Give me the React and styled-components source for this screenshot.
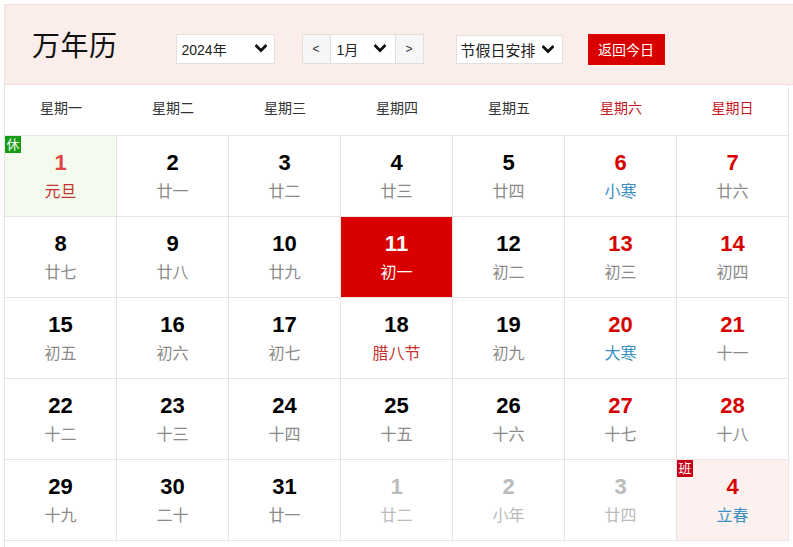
import React from "react";
import styled, { createGlobalStyle } from "styled-components";

const Global = createGlobalStyle`
  html, body { margin: 0; padding: 0; background: #fff; overflow: hidden; }
  body { font-family: "Liberation Sans", "Noto Sans CJK SC", sans-serif; }
`;

const Page = styled.div`
  padding: 4px 0 0 4px;
  width: 800px;
`;

const Header = styled.div`
  height: 81px;
  box-sizing: border-box;
  padding-top: 8px;
  padding-left: 27px;
  background: #fbeeea;
  border-top: 1px solid #f3e1dc;
  border-left: 1px solid #f3e1dc;
  border-bottom: 1px solid #efdcd7;
  display: flex;
  align-items: center;
`;

const Title = styled.h1`
  margin: 0 58px 0 0;
  font-size: 28px;
  font-weight: normal;
  color: #111;
  letter-spacing: 0.5px;
  line-height: 1;
  position: relative;
  top: -2px;
`;

const Select = styled.div`
  box-sizing: border-box;
  height: ${(p) => p.h || 30}px;
  width: ${(p) => p.w}px;
  background: #fff;
  border: 1px solid #e6dedd;
  display: flex;
  align-items: center;
  justify-content: space-between;
  padding: 0 ${(p) => p.pr || 7}px 0 ${(p) => p.pl || 5}px;
  font-size: ${(p) => p.fs || 14}px;
  color: #222;
`;

const Group = styled.div`
  display: flex;
  margin-left: 27px;
  border: 1px solid #e6dedd;
  height: 30px;
  box-sizing: border-box;
`;

const Arrow = styled.div`
  width: 27px;
  background: #f6f6f6;
  display: flex;
  align-items: center;
  justify-content: center;
  font-size: 12px;
  color: #333;
  border-${(p) => p.side}: 1px solid #e6dedd;
`;

const MonthSel = styled.div`
  width: 64px;
  background: #fff;
  display: flex;
  align-items: center;
  justify-content: space-between;
  padding: 0 9px 0 6px;
  box-sizing: border-box;
  font-size: 14px;
  color: #222;
`;

const HolidaySel = styled(Select)`
  margin-left: 32px;
  margin-top: 2px;
`;

const TodayBtn = styled.button`
  margin-left: 25px;
  margin-top: 1px;
  height: 31px;
  width: 77px;
  background: #d90000;
  color: #fff;
  border: none;
  font-family: inherit;
  font-size: 14px;
  padding: 0;
  cursor: pointer;
`;

const Grid = styled.div`
  width: 784px;
  border-left: 1px solid #ebe3e3;
  display: grid;
  grid-template-columns: repeat(7, 112px);
`;

const WeekCell = styled.div`
  height: 51px;
  box-sizing: border-box;
  border-bottom: 1px solid #ebe3e3;
  border-right: ${(p) => (p.last ? "1px solid #ebe3e3" : "none")};
  display: flex;
  align-items: center;
  justify-content: center;
  font-size: 14px;
  color: ${(p) => (p.weekend ? "#c8161d" : "#333")};
  padding-bottom: 6px;
`;

const Cell = styled.div`
  position: relative;
  height: 81px;
  box-sizing: border-box;
  border-right: 1px solid #ebe3e3;
  border-bottom: 1px solid #ebe3e3;
  background: ${(p) => p.bg || "#fff"};
  display: flex;
  flex-direction: column;
  align-items: center;
  padding-top: 15px;
`;

const DayNum = styled.div`
  font-size: 22px;
  font-weight: bold;
  line-height: 24px;
  color: ${(p) => p.color};
`;

const Lunar = styled.div`
  margin-top: 6px;
  font-size: 16px;
  line-height: 22px;
  color: ${(p) => p.color};
`;

const Badge = styled.span`
  position: absolute;
  top: 0;
  left: 0;
  width: 16px;
  height: 17px;
  background: ${(p) => p.bg};
  color: #fff;
  font-size: 13px;
  line-height: 17px;
  text-align: center;
`;

const Footer = styled.div`
  height: 20px;
  width: 784px;
  border-left: 1px solid #ebe3e3;
`;

const Chevron = () => (
  <svg width="12" height="9" viewBox="0 0 12 9">
    <path d="M1.5 2 L6 6.5 L10.5 2" fill="none" stroke="#111" strokeWidth="2.8" strokeLinecap="square" />
  </svg>
);

const C = {
  black: "#000",
  red: "#d60000",
  lightRed: "#e04444",
  gray: "#8a8a8a",
  fest: "#c4332f",
  term: "#3b8fc2",
  faded: "#bbb",
  white: "#fff",
};

const days = [
  { d: 1, l: "元旦", lc: "fest", dc: "lightRed", bg: "#f3fbee", badge: "休" },
  { d: 2, l: "廿一" },
  { d: 3, l: "廿二" },
  { d: 4, l: "廿三" },
  { d: 5, l: "廿四" },
  { d: 6, l: "小寒", lc: "term", we: true },
  { d: 7, l: "廿六", we: true },
  { d: 8, l: "廿七" },
  { d: 9, l: "廿八" },
  { d: 10, l: "廿九" },
  { d: 11, l: "初一", today: true },
  { d: 12, l: "初二" },
  { d: 13, l: "初三", we: true },
  { d: 14, l: "初四", we: true },
  { d: 15, l: "初五" },
  { d: 16, l: "初六" },
  { d: 17, l: "初七" },
  { d: 18, l: "腊八节", lc: "fest" },
  { d: 19, l: "初九" },
  { d: 20, l: "大寒", lc: "term", we: true },
  { d: 21, l: "十一", we: true },
  { d: 22, l: "十二" },
  { d: 23, l: "十三" },
  { d: 24, l: "十四" },
  { d: 25, l: "十五" },
  { d: 26, l: "十六" },
  { d: 27, l: "十七", we: true },
  { d: 28, l: "十八", we: true },
  { d: 29, l: "十九" },
  { d: 30, l: "二十" },
  { d: 31, l: "廿一" },
  { d: 1, l: "廿二", other: true },
  { d: 2, l: "小年", other: true },
  { d: 3, l: "廿四", other: true },
  { d: 4, l: "立春", lc: "term", dc: "red", bg: "#fcf1ee", badge: "班" },
];

const weekdays = ["星期一", "星期二", "星期三", "星期四", "星期五", "星期六", "星期日"];

export default function App() {
  return (
    <>
      <Global />
      <Page>
        <Header>
          <Title>万年历</Title>
          <Select w={99}>
            <span>2024年</span>
            <Chevron />
          </Select>
          <Group>
            <Arrow side="right">&lt;</Arrow>
            <MonthSel>
              <span>1月</span>
              <Chevron />
            </MonthSel>
            <Arrow side="left">&gt;</Arrow>
          </Group>
          <HolidaySel w={107} h={29} fs={15} pl={4} pr={8}>
            <span>节假日安排</span>
            <Chevron />
          </HolidaySel>
          <TodayBtn>返回今日</TodayBtn>
        </Header>
        <Grid>
          {weekdays.map((w, i) => (
            <WeekCell key={w} weekend={i >= 5} last={i === 6}>
              {w}
            </WeekCell>
          ))}
          {days.map((x, i) => {
            let dc = x.dc ? C[x.dc] : x.we ? C.red : C.black;
            let lc = x.lc ? C[x.lc] : C.gray;
            let bg = x.bg;
            if (x.today) {
              dc = C.white;
              lc = C.white;
              bg = "#d90000";
            }
            if (x.other) {
              dc = C.faded;
              lc = C.faded;
            }
            return (
              <Cell key={i} bg={bg}>
                {x.badge && (
                  <Badge bg={x.badge === "休" ? "#169b16" : "#c8001a"}>{x.badge}</Badge>
                )}
                <DayNum color={dc}>{x.d}</DayNum>
                <Lunar color={lc}>{x.l}</Lunar>
              </Cell>
            );
          })}
        </Grid>
        <Footer />
      </Page>
    </>
  );
}
